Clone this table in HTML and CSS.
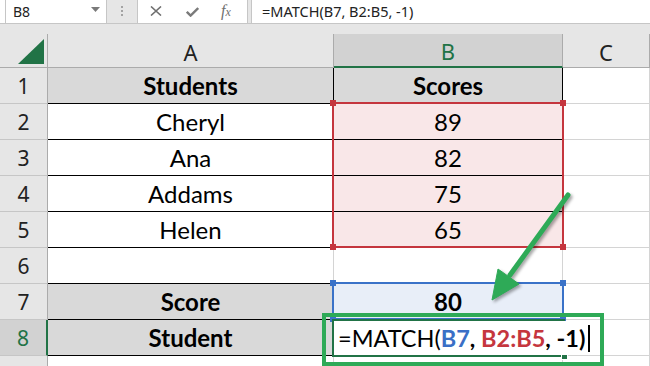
FILE: index.html
```html
<!DOCTYPE html>
<html>
<head>
<meta charset="utf-8">
<link rel="stylesheet" href="styles.css">
</head>
<body>
<div class="app">
  <div class="topbar">
    <div class="namebox"><span>B8</span><svg width="9" height="5" viewBox="0 0 9 5"><path d="M0 0h9L4.5 5z" fill="#7a7a7a"/></svg></div>
    <div class="grip"><i></i><i></i><i></i></div>
    <div class="fxbtns">
      <svg class="ic-x" width="12" height="10" viewBox="0 0 12 10"><path d="M1 0.5L11 9.5M11 0.5L1 9.5" stroke="#6f6f6f" stroke-width="1.6" fill="none"/></svg>
      <svg class="ic-ok" width="13" height="10" viewBox="0 0 13 10"><path d="M0.8 4.8L4.6 8.6L12.2 1" stroke="#7a7a7a" stroke-width="2.4" fill="none"/></svg>
      <span class="fx">f<span>x</span></span>
    </div>
    <div class="formula">=MATCH(B7, B2:B5, -1)</div>
  </div>
  <div class="band"></div>
  <div class="colheads">
    <div class="corner"><svg width="26" height="25" viewBox="0 0 26 25"><path d="M26 0V25H0z" fill="#217346"/></svg></div>
    <div class="ch">A</div>
    <div class="ch sel">B</div>
    <div class="ch">C</div>
  </div>
  <div class="grid">
    <div class="rh">1</div><div class="c t hd b">Students</div><div class="c t hd b">Scores</div><div class="c"></div>
    <div class="rh">2</div><div class="c t">Cheryl</div><div class="c t pink">89</div><div class="c"></div>
    <div class="rh">3</div><div class="c t">Ana</div><div class="c t pink">82</div><div class="c"></div>
    <div class="rh">4</div><div class="c t">Addams</div><div class="c t pink">75</div><div class="c"></div>
    <div class="rh">5</div><div class="c t">Helen</div><div class="c t pink">65</div><div class="c"></div>
    <div class="rh">6</div><div class="c tb"></div><div class="c tb"></div><div class="c"></div>
    <div class="rh">7</div><div class="c t hd b">Score</div><div class="c t blue b">80</div><div class="c"></div>
    <div class="rh rsel">8</div><div class="c t hd b">Student</div><div class="c t"></div><div class="c"></div>
    <div class="rh"></div><div class="c"></div><div class="c"></div><div class="c"></div>

    <div class="range red"><i class="h tl"></i><i class="h tr"></i><i class="h bl"></i><i class="h br"></i></div>
    <div class="range bluer"><i class="h tl"></i><i class="h tr"></i><i class="h bl"></i><i class="h br"></i></div>
    <div class="cellsel"><i class="fill"></i></div>
    <div class="editor"><span>=MATCH(</span><b class="rb">B7</b><b>, </b><b class="rr">B2:B5</b><b>, -1)</b><i class="caret"></i></div>
    <div class="callout"></div>
  </div>
  <svg class="arrow" width="650" height="366" viewBox="0 0 650 366">
    <g fill="#2eaa57" stroke="#2eaa57">
      <line x1="568" y1="195" x2="510" y2="275" stroke-width="5" stroke-linecap="round"/>
      <polygon points="492,300 519,284 498,269" stroke-width="1" stroke-linejoin="round"/>
    </g>
  </svg>
</div>
</body>
</html>
```

FILE: styles.css
```css
* { box-sizing: border-box; margin: 0; padding: 0; }
html, body { width: 650px; height: 366px; overflow: hidden; background: #fff; }
body { font-family: "Lato", "Liberation Sans", sans-serif; color: #000; }
.app { position: relative; width: 650px; height: 366px; overflow: hidden; }

.topbar {
  height: 24px;
  display: flex;
  border-bottom: 1px solid #c6c6c6;
  background: linear-gradient(to right, #fff 107px, #e6e6e6 107px);
  padding-left: 5px;
}
.namebox {
  width: 102px;
  background: #fff;
  border-left: 1px solid #c6c6c6;
  border-right: 1px solid #c6c6c6;
  display: flex;
  align-items: center;
  justify-content: space-between;
  padding: 0 6px 1px 7px;
  font: 14px "Noto Sans", sans-serif;
  color: #222;
}
.namebox svg { margin-bottom: 3px; }
.grip {
  width: 30px;
  display: flex;
  flex-direction: column;
  align-items: center;
  justify-content: center;
  gap: 2px;
  padding-bottom: 2px;
}
.grip i { display: block; width: 2px; height: 2px; background: #a3a3a3; }
.fxbtns {
  width: 111px;
  background: #fff;
  border-left: 1px solid #c6c6c6;
  border-right: 1px solid #c6c6c6;
  display: flex;
  align-items: center;
  padding: 0 0 1px 12px;
}
.ic-x { margin-right: 24px; }
.ic-ok { margin-right: 22px; margin-top: 1px; }
.fx { font: italic 16px "Liberation Serif", serif; color: #6f6f6f; line-height: 1; }
.fx span { font-size: 12px; }
.formula {
  flex: 1;
  margin-left: 3px;
  background: #fff;
  border-left: 1px solid #c6c6c6;
  padding: 0 0 1px 10px;
  display: flex;
  align-items: center;
  font: 14.5px "Noto Sans", sans-serif;
  color: #222;
}

.band { height: 10px; background: #e6e6e6; }

.colheads {
  height: 34px;
  display: grid;
  grid-template-columns: 48px 286px 229px 1fr;
  background: #e6e6e6;
}
.corner {
  border-right: 1px solid #ababab;
  border-bottom: 1px solid #ababab;
  display: flex;
  align-items: flex-end;
  justify-content: flex-end;
  padding: 0 3px 3px 0;
}
.ch {
  border-bottom: 1px solid #ababab;
  border-right: 1px solid #ababab;
  display: flex;
  align-items: center;
  justify-content: center;
  font: 22px "Noto Sans", sans-serif;
  color: #222;
  padding-top: 2px;
}
.ch.sel { background: #d2d2d2; color: #217346; border-bottom: 2px solid #217346; }

.grid {
  position: relative;
  display: grid;
  grid-template-columns: 48px 286px 229px 1fr;
  grid-auto-rows: 36px;
}
.rh {
  background: #e6e6e6;
  border-right: 1px solid #ababab;
  border-bottom: 1px solid #c6c6c6;
  display: flex;
  align-items: center;
  justify-content: center;
  font: 21px "Noto Sans", sans-serif;
  color: #222;
}
.rh.rsel { background: #d2d2d2; color: #217346; border-right: 2px solid #217346; }
.c {
  border-bottom: 1px solid #d4d4d4;
  border-right: 1px solid #d4d4d4;
  display: flex;
  align-items: center;
  justify-content: center;
  font-size: 24px;
}
.c.t { border-bottom-color: #000; border-right-color: #000; }
.c.tb { border-bottom-color: #000; }
.c.hd { background: #d9d9d9; }
.c.pink { background: #f9e7e8; }
.c.blue { background: #e8eef8; }
.c.b { font-weight: 700; }

.range { position: absolute; left: 332px; width: 232px; border: 2px solid; }
.range.red { top: 34px; height: 146px; border-color: #c5363e; }
.range.bluer { top: 214px; height: 38px; border-color: #3a72c8; }
.range .h { position: absolute; width: 6px; height: 6px; }
.range.red .h { background: #c5363e; }
.range.bluer .h { background: #3a72c8; }
.h.tl { left: -4px; top: -4px; }
.h.tr { right: -4px; top: -4px; }
.h.bl { left: -4px; bottom: -4px; }
.h.br { right: -4px; bottom: -4px; }

.cellsel {
  position: absolute;
  left: 332px;
  top: 251px;
  width: 233px;
  height: 38px;
  border: 2px solid #217346;
}
.fill {
  position: absolute;
  right: -5px;
  bottom: -5px;
  width: 7px;
  height: 7px;
  background: #217346;
  border: 1px solid #fff;
}
.editor {
  position: absolute;
  left: 334px;
  top: 253px;
  width: 256px;
  height: 34px;
  background: #fff;
  display: flex;
  align-items: center;
  padding-left: 4px;
  font-size: 23.5px;
  white-space: pre;
}
.editor b { font-weight: 700; }
.editor .rb { color: #3a6fc6; }
.editor .rr { color: #c5363e; }
.caret { display: block; width: 1.5px; height: 27px; background: #000; margin-left: 3px; }

.callout {
  position: absolute;
  left: 322px;
  top: 245px;
  width: 282px;
  height: 53px;
  border: 4px solid #2eaa57;
}

.arrow {
  position: absolute;
  left: 0;
  top: 0;
  filter: drop-shadow(2px 2px 1.5px rgba(0, 0, 0, 0.35));
}
```
